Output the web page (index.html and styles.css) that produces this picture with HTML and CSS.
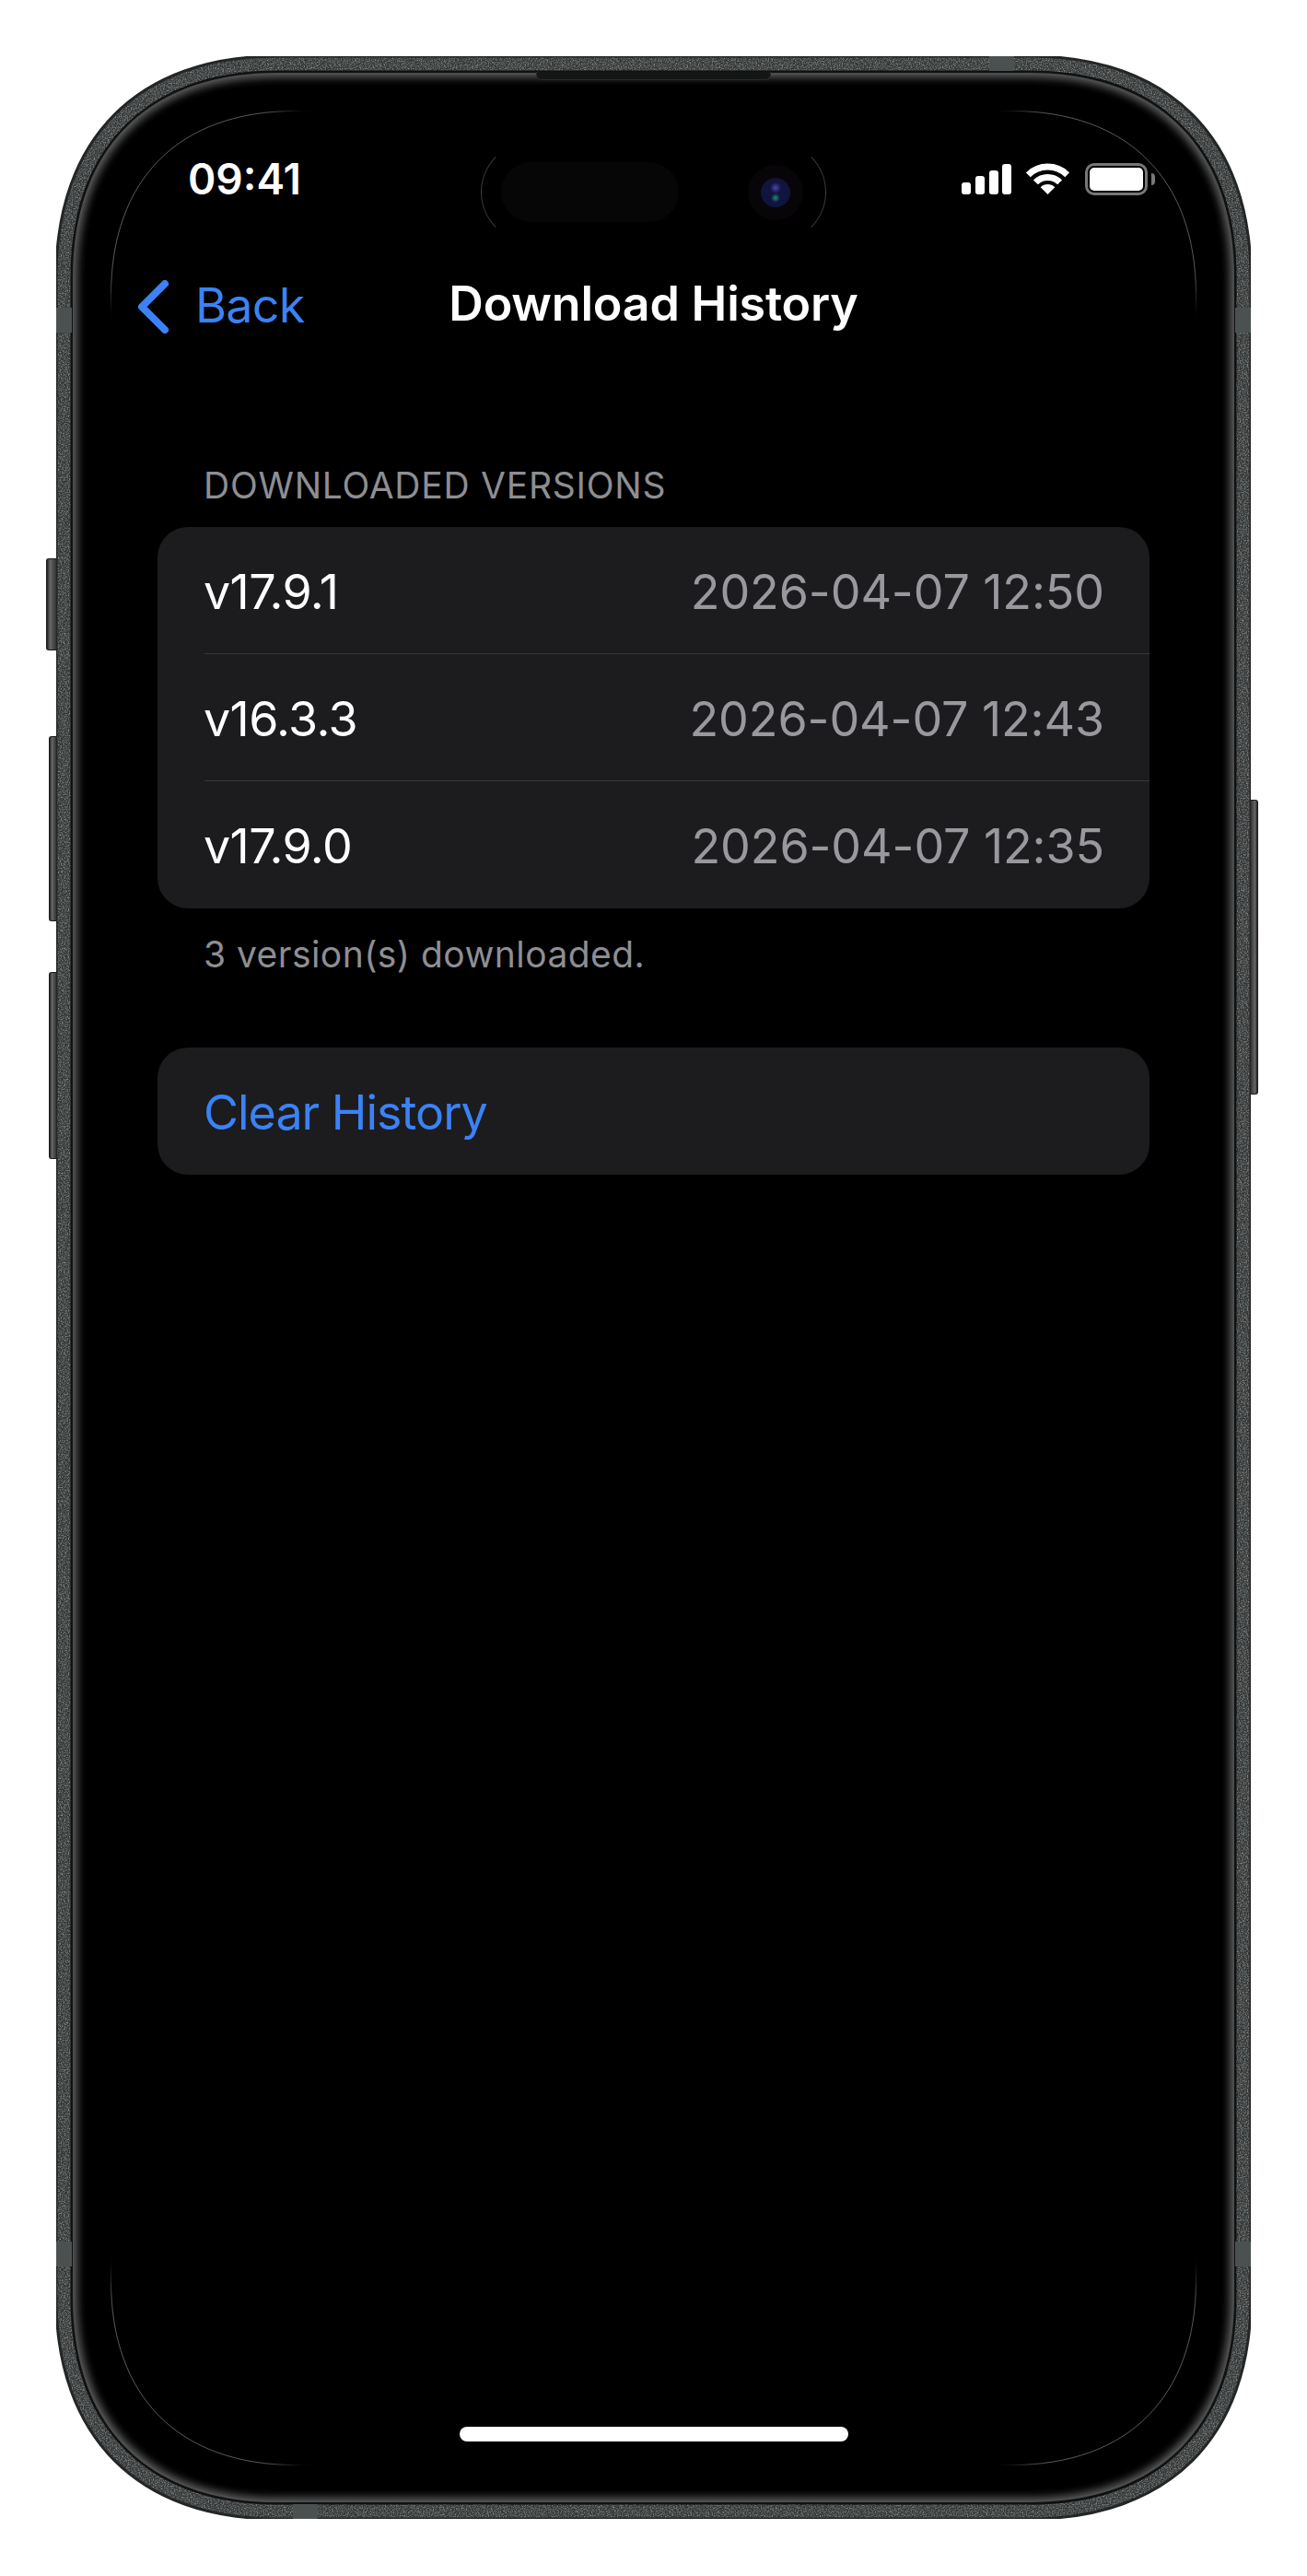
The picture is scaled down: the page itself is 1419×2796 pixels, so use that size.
FILE: index.html
```html
<!DOCTYPE html>
<html lang="en">
<head>
    <meta charset="UTF-8">
    <title>Download History</title>
    <link rel="stylesheet" href="styles.css">
</head>
<body>
    <div class="phone">
        <!-- metal frame with grain, black glass inside it -->
        <svg class="frame" width="1297" height="2673" viewBox="0 0 1297 2673">
            <defs>
                <path id="outer" d="M240 0H1057C1208 0 1297 89 1297 240V2433C1297 2584 1208 2673 1057 2673H240C89 2673 0 2584 0 2433V240C0 89 89 0 240 0Z"/>
                <path id="glass" d="M240 18H1057C1197 18 1279 100 1279 240V2433C1279 2573 1197 2655 1057 2655H240C100 2655 18 2573 18 2433V240C18 100 100 18 240 18Z"/>
                <clipPath id="inGlass"><use href="#glass"/></clipPath>
                <filter id="grain" filterUnits="userSpaceOnUse" x="0" y="0" width="1297" height="2673">
                    <feTurbulence type="fractalNoise" baseFrequency="0.75" numOctaves="2" seed="4" result="n"/>
                    <feColorMatrix in="n" type="matrix" values="0 0 0 0 1  0 0 0 0 1  0 0 0 0 1  1 0 0 0 -0.4"/>
                    <feComposite in2="SourceGraphic" operator="in"/>
                </filter>
                <filter id="glow" filterUnits="userSpaceOnUse" x="0" y="0" width="1297" height="2673">
                    <feGaussianBlur stdDeviation="5"/>
                </filter>
            </defs>
            <use href="#outer" fill="#333636"/>
            <use href="#outer" fill="#fff" filter="url(#grain)"/>
            <use href="#outer" fill="none" stroke="#242626" stroke-width="3"/>
            <use href="#glass" fill="#000" stroke="#101111" stroke-width="5"/>
            <g clip-path="url(#inGlass)">
                <use href="#glass" fill="none" stroke="#6a6a6a" stroke-width="9" filter="url(#glow)"/>
            </g>
        </svg>

        <!-- antenna bands -->
        <span class="band band-top"></span>
        <span class="band band-bottom"></span>
        <span class="band band-lt"></span>
        <span class="band band-rt"></span>
        <span class="band band-lb"></span>
        <span class="band band-rb"></span>

        <!-- side buttons -->
        <span class="sidebtn mute"></span>
        <span class="sidebtn volup"></span>
        <span class="sidebtn voldown"></span>
        <span class="sidebtn power"></span>

        <span class="speaker"></span>

        <div class="bezel">
            <div class="screen">
                <!-- faint screen edge, only seen at the corners -->
                <svg class="edge" width="1179" height="2556" viewBox="0 0 1179 2556">
                    <defs>
                        <filter id="soft"><feGaussianBlur stdDeviation="14"/></filter>
                        <mask id="corners" maskUnits="userSpaceOnUse" x="0" y="0" width="1179" height="2556">
                            <rect width="1179" height="2556" fill="#fff"/>
                            <g filter="url(#soft)">
                                <rect x="190" y="-100" width="799" height="2756" fill="#000"/>
                                <rect x="-100" y="200" width="1379" height="2156" fill="#000"/>
                            </g>
                        </mask>
                    </defs>
                    <path d="M200.5 .5H978.5C1104.5 .5 1178.5 74.5 1178.5 200.5V2355.5C1178.5 2481.5 1104.5 2555.5 978.5 2555.5H200.5C74.5 2555.5 .5 2481.5 .5 2355.5V200.5C.5 74.5 74.5 .5 200.5 .5Z" fill="none" stroke="#5a5a5a" mask="url(#corners)"/>
                </svg>

                <!-- dynamic island -->
                <div class="island">
                    <div class="sensor"></div>
                    <div class="camera"><i></i></div>
                </div>

                <div class="status">
                    <span class="time">09:41</span>
                    <div class="status-icons">
                        <svg class="signal" width="54" height="33" viewBox="0 0 54 33">
                            <rect x="0" y="20" width="10" height="13" rx="3"/>
                            <rect x="15" y="13" width="10" height="20" rx="3"/>
                            <rect x="30" y="7" width="10" height="26" rx="3"/>
                            <rect x="44" y="0" width="10" height="33" rx="3"/>
                        </svg>
                        <svg class="wifi" width="47" height="35" viewBox="0 0 47 35">
                            <path d="M2.3 13.8A30 30 0 0 1 44.7 13.8" fill="none" stroke="#fff" stroke-width="7"/>
                            <path d="M10.4 21.9A18.5 18.5 0 0 1 36.6 21.9" fill="none" stroke="#fff" stroke-width="7"/>
                            <path d="M23.5 35L15.7 27.2A11 11 0 0 1 31.3 27.2Z" fill="#fff"/>
                        </svg>
                        <div class="battery"><i></i></div>
                        <span class="nub"></span>
                    </div>
                </div>

                <div class="nav">
                    <a class="back">
                        <svg width="34" height="58" viewBox="0 0 34 58">
                            <polyline points="29,4 4,29 29,54" fill="none" stroke="#3b82f6" stroke-width="8" stroke-linecap="round" stroke-linejoin="round"/>
                        </svg>
                        <span>Back</span>
                    </a>
                    <h1 class="title">Download History</h1>
                </div>

                <div class="content">
                    <div class="sec-label">DOWNLOADED VERSIONS</div>
                    <ul class="card">
                        <li class="row"><span class="ver">v17.9.1</span><span class="date">2026-04-07 12:50</span></li>
                        <li class="row"><span class="ver">v16.3.3</span><span class="date">2026-04-07 12:43</span></li>
                        <li class="row"><span class="ver">v17.9.0</span><span class="date">2026-04-07 12:35</span></li>
                    </ul>
                    <div class="sec-foot">3 version(s) downloaded.</div>
                    <div class="card clear">Clear History</div>
                </div>

                <div class="home"></div>
            </div>
        </div>
    </div>
</body>
</html>
```

FILE: styles.css
```css
* {
    box-sizing: border-box;
}

body {
    margin: 0;
    padding: 61px;
    background-color: #fff;
    font-family: Inter, "Liberation Sans", sans-serif;
    color: #fff;
}

/* phone body */
.phone {
    position: relative;
    width: 1297px;
    height: 2673px;
    padding: 18px;
}
.frame {
    position: absolute;
    top: 0;
    left: 0;
}

/* antenna bands */
.band {
    position: absolute;
    background-color: #4b5151;
}
.band-top {
    top: 0;
    left: 1013px;
    width: 27px;
    height: 16px;
}
.band-bottom {
    bottom: 0;
    left: 257px;
    width: 27px;
    height: 16px;
}
.band-lt,
.band-rt,
.band-lb,
.band-rb {
    width: 17px;
    height: 27px;
}
.band-lt {
    top: 273px;
    left: 0;
}
.band-rt {
    top: 273px;
    right: 0;
}
.band-lb {
    top: 2372px;
    left: 0;
}
.band-rb {
    top: 2372px;
    right: 0;
}

/* side buttons */
.sidebtn {
    position: absolute;
    width: 8px;
    border-radius: 3px 0 0 3px;
    background: linear-gradient(to right, #222 0, #666 35%, #333 100%);
    border: 1px solid #1c1c1c;
    border-right: 0;
}
.mute {
    top: 545px;
    left: -11px;
    width: 11px;
    height: 100px;
}
.volup {
    top: 738px;
    left: -8px;
    height: 201px;
}
.voldown {
    top: 994px;
    left: -8px;
    height: 203px;
}
.power {
    top: 807px;
    right: -8px;
    height: 320px;
    border-radius: 0 3px 3px 0;
    background: linear-gradient(to left, #222 0, #666 35%, #333 100%);
    border: 1px solid #1c1c1c;
    border-left: 0;
}

/* speaker slit on top of the glass */
.speaker {
    position: absolute;
    z-index: 2;
    top: 17px;
    left: 521px;
    width: 255px;
    height: 9px;
    background-color: #141515;
    border: 1px solid #2a2a2a;
    border-top: 0;
    border-radius: 0 0 6px 6px;
}

/* glass area, the black itself is in the frame svg */
.bezel {
    position: relative;
    width: 1261px;
    height: 2637px;
    padding: 41px;
}

.screen {
    position: relative;
    display: flex;
    flex-direction: column;
    width: 1179px;
    height: 2556px;
}
.edge {
    position: absolute;
    top: 0;
    left: 0;
}

/* dynamic island */
.island {
    position: absolute;
    top: 34px;
    left: 402px;
    width: 375px;
    height: 109px;
    border-radius: 55px;
    border: 1px solid;
    border-color: #000 #3a3a3a;
}
.sensor {
    position: absolute;
    top: 21px;
    left: 21px;
    width: 193px;
    height: 65px;
    border-radius: 33px;
    background-color: #060606;
}
.camera {
    position: absolute;
    top: 24px;
    left: 289px;
    display: flex;
    align-items: center;
    justify-content: center;
    width: 60px;
    height: 60px;
    border-radius: 50%;
    background-color: #080508;
}
.camera i {
    width: 32px;
    height: 32px;
    border-radius: 50%;
    background:
        radial-gradient(circle 6px at 50% 34%, #4a45b0, transparent),
        radial-gradient(circle 5px at 50% 68%, #1c8a7c, transparent),
        #11143c;
}

/* status bar */
.status {
    display: flex;
    justify-content: space-between;
    height: 142px;
    padding: 56px 45px 0 84px;
}
.time {
    font-size: 46px;
    font-weight: 600;
    line-height: 37px;
}
.status-icons {
    display: flex;
    align-items: flex-start;
}
.signal {
    margin-top: 2px;
    fill: #fff;
}
.wifi {
    margin-left: 16px;
}
.battery {
    width: 68px;
    height: 35px;
    margin-left: 17px;
    margin-top: 1px;
    padding: 2px;
    border: 3px solid #777;
    border-radius: 10px;
}
.battery i {
    display: block;
    width: 100%;
    height: 100%;
    border-radius: 5px;
    background-color: #fff;
}
.nub {
    width: 4px;
    height: 13px;
    margin: 12px 0 0 4px;
    border-radius: 0 4px 4px 0;
    background-color: #777;
}

/* nav bar */
.nav {
    position: relative;
    display: flex;
    align-items: center;
    justify-content: center;
    height: 134px;
}
.back {
    position: absolute;
    left: 30px;
    top: 38px;
    display: flex;
    align-items: center;
    gap: 28px;
    font-size: 52px;
    letter-spacing: -0.7px;
    color: #3b82f6;
}
.back span {
    margin-bottom: 3px;
}
.title {
    margin: 0;
    font-size: 52px;
    font-weight: 600;
    letter-spacing: -0.2px;
}

/* list */
.content {
    padding: 107px 51px 0;
}
.sec-label {
    padding-left: 50px;
    font-size: 39px;
    line-height: 48px;
    letter-spacing: 0.75px;
    color: #8e8e93;
    margin-bottom: 21px;
}
.card {
    margin: 0;
    padding: 0;
    list-style: none;
    border-radius: 33px;
    background-color: #1c1c1e;
}
.row {
    display: flex;
    align-items: center;
    justify-content: space-between;
    height: 138px;
    margin-left: 51px;
    padding: 3px 49px 0 0;
    border-bottom: 1px solid #38383a;
    font-size: 52px;
}
.row:last-child {
    border-bottom: 0;
}
.ver {
    margin-left: -1px;
    letter-spacing: -0.6px;
}
.date {
    letter-spacing: -0.1px;
    color: #98989e;
}
.sec-foot {
    margin: 26px 0 77px;
    padding-left: 50px;
    font-size: 39px;
    line-height: 48px;
    letter-spacing: 0.45px;
    color: #8e8e93;
}
.clear {
    height: 138px;
    padding-left: 50px;
    font-size: 52px;
    line-height: 141px;
    letter-spacing: -1px;
    color: #3b82f6;
}

/* home indicator */
.home {
    width: 422px;
    height: 16px;
    margin: auto auto 26px;
    border-radius: 8px;
    background-color: #fff;
}
```
